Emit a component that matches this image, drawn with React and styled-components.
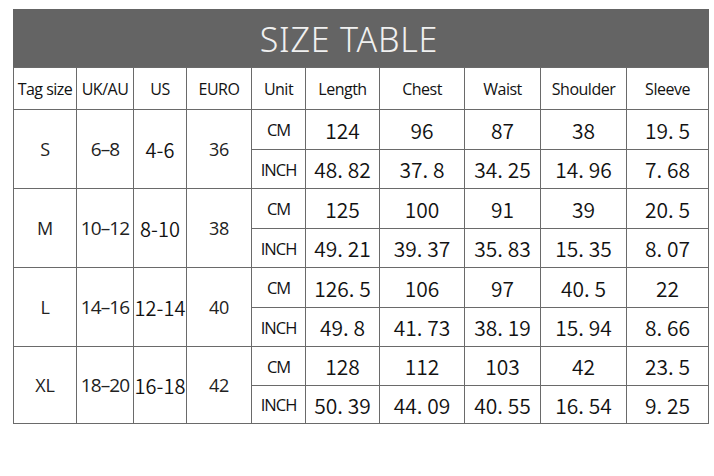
import React from "react";
import styled, { createGlobalStyle } from "styled-components";

const Global = createGlobalStyle`
  html, body { margin: 0; padding: 0; background: #fff; }
  body { font-family: "Open Sans", "Noto Sans", sans-serif; }
`;

const Page = styled.div`
  padding: 9px 0 0 13px;
  width: 714px;
  height: 476px;
  box-sizing: border-box;
`;

const TitleBar = styled.div`
  width: 696px;
  height: 58px;
  background: #646464;
  display: flex;
  align-items: center;
  justify-content: center;
  color: #f0f0f0;
  font-family: "Noto Sans", "Open Sans", sans-serif;
  font-size: 34px;
  font-weight: 300;
  letter-spacing: 0.8px;
  padding: 2px 24px 0 0;
  box-sizing: border-box;
`;

const Grid = styled.div`
  width: 696px;
  box-sizing: border-box;
  padding: 1px;
  background: #6a6a6a;
  display: grid;
  gap: 1px;
  grid-template-columns: 62px 56px 52px 64px 53px 73px 84px 75px 85px 81px;
  grid-template-rows: 41px 39px 38px 39px 38px 39px 38px 38px 37px;
`;

const Cell = styled.div`
  background: #fff;
  display: flex;
  align-items: center;
  justify-content: center;
  color: #121212;
  white-space: nowrap;
  font-weight: 400;
  grid-row: ${(p) => (p.$span ? `span ${p.$span}` : "auto")};
`;

const Head = styled(Cell)`
  font-family: "Open Sans", sans-serif;
  font-size: 16px;
  letter-spacing: -0.5px;
`;

const Label = styled(Cell)`
  font-family: "Open Sans", sans-serif;
  font-size: ${(p) => p.$size || 18}px;
  letter-spacing: ${(p) => (p.$tight ? "-0.9px" : "-0.2px")};
  color: #222;
`;

const Unit = styled(Cell)`
  font-family: "Open Sans", sans-serif;
  font-size: 16.5px;
  letter-spacing: -1px;
`;

const Num = styled(Cell)`
  font-family: "Noto Sans CJK SC", "Noto Sans", sans-serif;
  font-size: ${(p) => p.$size || 21}px;
  font-weight: 350;
`;

const headers = ["Tag size", "UK/AU", "US", "EURO", "Unit", "Length", "Chest", "Waist", "Shoulder", "Sleeve"];

const rows = [
  {
    tag: "S", uk: "6–8", us: "4-6", euro: "36",
    cm: ["124", "96", "87", "38", "19. 5"],
    inch: ["48. 82", "37. 8", "34. 25", "14. 96", "7. 68"],
  },
  {
    tag: "M", uk: "10–12", us: "8-10", euro: "38",
    cm: ["125", "100", "91", "39", "20. 5"],
    inch: ["49. 21", "39. 37", "35. 83", "15. 35", "8. 07"],
  },
  {
    tag: "L", uk: "14–16", us: "12-14", euro: "40",
    cm: ["126. 5", "106", "97", "40. 5", "22"],
    inch: ["49. 8", "41. 73", "38. 19", "15. 94", "8. 66"],
  },
  {
    tag: "XL", uk: "18–20", us: "16-18", euro: "42",
    cm: ["128", "112", "103", "42", "23. 5"],
    inch: ["50. 39", "44. 09", "40. 55", "16. 54", "9. 25"],
  },
];

export default function App() {
  return (
    <Page>
      <Global />
      <TitleBar>SIZE TABLE</TitleBar>
      <Grid>
        {headers.map((h) => (
          <Head key={h}>{h}</Head>
        ))}
        {rows.map((r) => (
          <React.Fragment key={r.tag}>
            <Label $span={2} $size={18}>{r.tag}</Label>
            <Label $span={2} $size={19} $tight>{r.uk}</Label>
            <Num $span={2} $size={20}>{r.us}</Num>
            <Label $span={2} $size={18}>{r.euro}</Label>
            <Unit>CM</Unit>
            {r.cm.map((v, i) => (
              <Num key={"c" + i}>{v}</Num>
            ))}
            <Unit>INCH</Unit>
            {r.inch.map((v, i) => (
              <Num key={"i" + i}>{v}</Num>
            ))}
          </React.Fragment>
        ))}
      </Grid>
    </Page>
  );
}
